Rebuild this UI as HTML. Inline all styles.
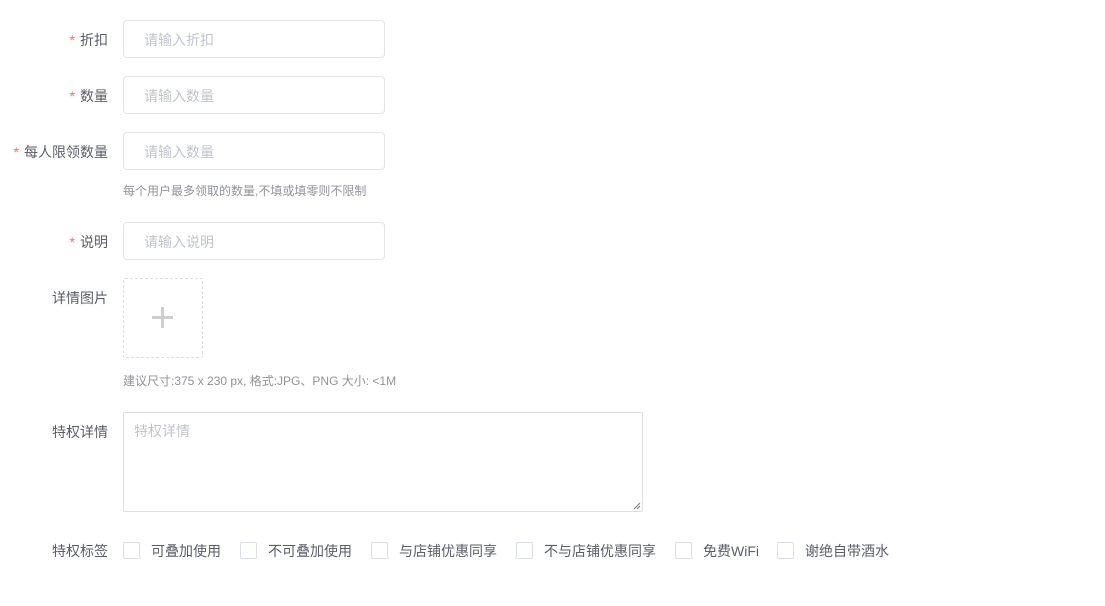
<!DOCTYPE html>
<html><head><meta charset="utf-8"><style>
body{margin:0;width:1105px;height:606px;background:#fff;font-family:"Liberation Sans","Noto Sans CJK SC",sans-serif;position:relative;overflow:hidden}
.l{position:absolute;right:997px;font-size:14px;color:#5a5e66;white-space:nowrap;line-height:16px}
.l b{color:#f56c6c;font-weight:normal;margin-right:5px;font-size:14px}
.in{position:absolute;left:123px;width:260px;height:36px;border:1px solid #e2e4e8;border-radius:4px;font-size:14px;color:#c0c4cc;line-height:38px;box-sizing:content-box}
.in span{margin-left:20px}
.t{position:absolute;left:123px;font-size:12px;color:#909399;white-space:nowrap}
.cb{position:absolute;top:542px;width:15px;height:15px;border:1px solid #dcdfe6;border-radius:2px}
.ct{position:absolute;top:543px;font-size:14px;color:#5a5e66;white-space:nowrap;line-height:17px}
</style></head><body>
<div class="l" style="top:32px"><b>*</b>折扣</div>
<div class="in" style="top:20px"><span>请输入折扣</span></div>
<div class="l" style="top:88px"><b>*</b>数量</div>
<div class="in" style="top:76px"><span>请输入数量</span></div>
<div class="l" style="top:144px"><b>*</b>每人限领数量</div>
<div class="in" style="top:132px"><span>请输入数量</span></div>
<div class="t" style="top:182px">每个用户最多领取的数量,不填或填零则不限制</div>
<div class="l" style="top:234px"><b>*</b>说明</div>
<div class="in" style="top:222px"><span>请输入说明</span></div>
<div class="l" style="top:290px">详情图片</div>
<div style="position:absolute;left:123px;top:278px;width:78px;height:78px;border:1px dashed #dcdfe6;border-radius:2px"></div>
<div style="position:absolute;left:152px;top:316px;width:21px;height:3px;background:#cfcfcf"></div>
<div style="position:absolute;left:161px;top:307px;width:3px;height:21px;background:#cfcfcf"></div>
<div class="t" style="top:372px">建议尺寸:375 x 230 px, 格式:JPG、PNG 大小: &lt;1M</div>
<div class="l" style="top:424px">特权详情</div>
<div style="position:absolute;left:123px;top:412px;width:518px;height:98px;border:1px solid #dcdfe6;border-radius:2px;font-size:14px;color:#c0c4cc"><div style="margin:8px 0 0 10px">特权详情</div>
<svg style="position:absolute;right:1px;bottom:1px" width="8" height="8"><path d="M1 7L7 1M4 7L7 4" stroke="#777" stroke-width="1"/></svg></div>
<div class="l" style="top:543px">特权标签</div>
<div class="cb" style="left:123px"></div><div class="ct" style="left:151px">可叠加使用</div>
<div class="cb" style="left:240px"></div><div class="ct" style="left:268px">不可叠加使用</div>
<div class="cb" style="left:371px"></div><div class="ct" style="left:399px">与店铺优惠同享</div>
<div class="cb" style="left:516px"></div><div class="ct" style="left:544px">不与店铺优惠同享</div>
<div class="cb" style="left:675px"></div><div class="ct" style="left:703px">免费WiFi</div>
<div class="cb" style="left:777px"></div><div class="ct" style="left:805px">谢绝自带酒水</div>
</body></html>
